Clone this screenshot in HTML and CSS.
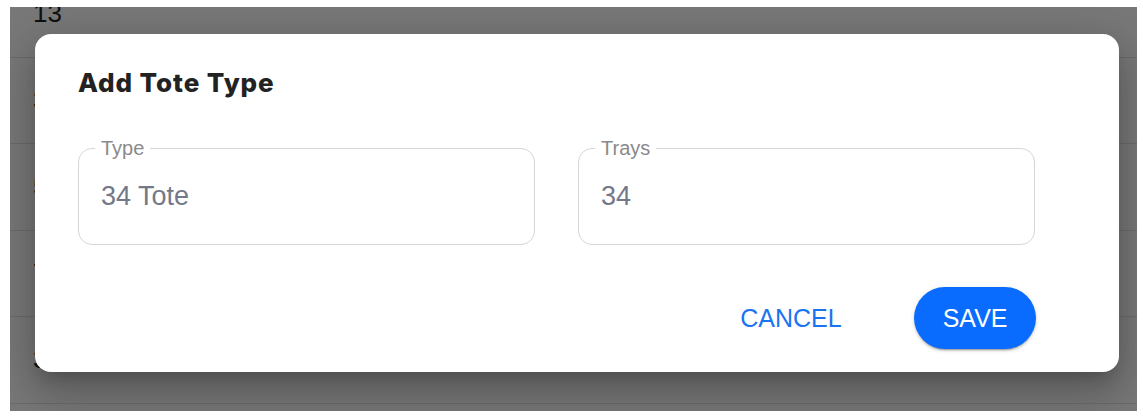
FILE: index.html
```html
<!DOCTYPE html>
<html lang="en">
<head>
<meta charset="utf-8">
<title>Add Tote Type</title>
<link rel="stylesheet" href="styles.css">
</head>
<body>
<div class="viewport">
  <div class="table">
    <div class="row"><span>13</span></div>
    <div class="row"><span>34</span></div>
    <div class="row"><span>50</span></div>
    <div class="row"><span>72</span></div>
    <div class="row"><span>36</span></div>
  </div>
  <div class="backdrop">
    <div class="dialog" role="dialog" aria-labelledby="dlg-title">
      <h2 class="dialog-title" id="dlg-title">Add Tote Type</h2>
      <div class="fields">
        <fieldset class="field">
          <legend class="field-label">Type</legend>
          <input class="field-input" type="text" value="34 Tote">
        </fieldset>
        <fieldset class="field">
          <legend class="field-label">Trays</legend>
          <input class="field-input" type="text" value="34">
        </fieldset>
      </div>
      <div class="actions">
        <button class="btn btn-text" type="button">CANCEL</button>
        <button class="btn btn-contained" type="button">SAVE</button>
      </div>
    </div>
  </div>
</div>
</body>
</html>
```
FILE: styles.css
```css
html, body {
  margin: 0;
  padding: 0;
  background: #ffffff;
}

body {
  width: 1143px;
  height: 416px;
  overflow: hidden;
}

.viewport {
  position: relative;
  margin: 7px 6px 5px 10px;
  height: 404px;
  overflow: hidden;
  background: #ffffff;
}

.table {
  margin-top: -36px;
}

.row {
  height: 85.5px;
  border-bottom: 1px solid #e3e3e3;
  display: flex;
  align-items: center;
  padding-left: 23px;
  font-family: "Liberation Sans", Arial, sans-serif;
  font-size: 26px;
  color: #222222;
}

.backdrop {
  position: absolute;
  inset: 0;
  background: rgba(0, 0, 0, 0.53);
  padding: 27px 18px 0 25px;
}

.dialog {
  background: #ffffff;
  border-radius: 16px;
  padding: 32px 83px 23px 43px;
  box-shadow: 0 11px 15px -7px rgba(0, 0, 0, 0.2),
              0 24px 38px 3px rgba(0, 0, 0, 0.14),
              0 9px 46px 8px rgba(0, 0, 0, 0.12);
}

.dialog-title {
  margin: 0;
  font-family: Inter, "Open Sans", sans-serif;
  font-weight: 800;
  font-size: 26px;
  line-height: 34px;
  letter-spacing: 0.9px;
  color: #222222;
}

.fields {
  display: grid;
  grid-template-columns: 457px 457px;
  column-gap: 43px;
  margin-top: 38px;
}

.field {
  margin: 0;
  padding: 22px 22px 32px 22px;
  border: 1px solid #d6d6d6;
  border-radius: 14px;
  min-width: 0;
}

.field-label {
  margin-left: -6px;
  padding: 0 6px;
  font-family: "Liberation Sans", Arial, sans-serif;
  font-size: 20px;
  line-height: 20px;
  color: #8a8a8a;
}

.field-input {
  display: block;
  width: 100%;
  height: 32px;
  margin: 0;
  padding: 0;
  border: none;
  outline: none;
  background: transparent;
  font-family: "Liberation Sans", Arial, sans-serif;
  font-size: 27px;
  line-height: 32px;
  color: #747888;
}

.actions {
  display: flex;
  justify-content: flex-end;
  align-items: center;
  gap: 44px;
  margin-top: 42px;
}

.btn {
  height: 62px;
  padding: 0 28.5px;
  border: none;
  border-radius: 31px;
  font-family: "Liberation Sans", Arial, sans-serif;
  font-weight: 400;
  font-size: 25px;
  cursor: pointer;
}

.btn-text {
  background: transparent;
  color: #1a74f2;
}

.btn-contained {
  background: #0a6cff;
  color: #ffffff;
  box-shadow: 0 3px 1px -2px rgba(0, 0, 0, 0.2),
              0 2px 2px 0 rgba(0, 0, 0, 0.14),
              0 1px 5px 0 rgba(0, 0, 0, 0.12);
}
```
